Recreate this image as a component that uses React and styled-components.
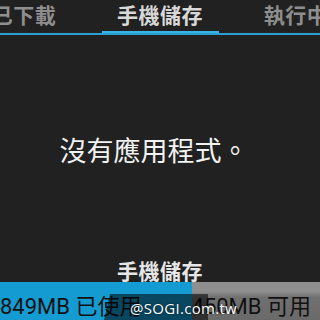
import styled, { createGlobalStyle } from "styled-components";

const GlobalStyle = createGlobalStyle`
  html, body {
    margin: 0;
    padding: 0;
    background: #212121;
  }
`;

const tabs = [
  { label: "已下載", active: false },
  { label: "手機儲存", active: true },
  { label: "執行中", active: false },
];

export default function App() {
  return (
    <>
      <GlobalStyle />
      <Screen>
        <TabBar>
          <TabRow>
            {tabs.map((t) => (
              <Tab key={t.label} active={t.active}>
                {t.label}
              </Tab>
            ))}
          </TabRow>
        </TabBar>

        <Empty>沒有應用程式。</Empty>

        <Footer>
          <StorageLabel>手機儲存</StorageLabel>
          <UsageBar>
            <Used style={{ width: "65%" }}>849MB 已使用</Used>
            <Free>450MB 可用</Free>
            <Shade />
            <Watermark>@SOGI.com.tw</Watermark>
          </UsageBar>
        </Footer>
      </Screen>
    </>
  );
}

const Screen = styled.div`
  width: 320px;
  height: 320px;
  overflow: hidden;
  display: flex;
  flex-direction: column;
  background: #212121;
  font-family: "Noto Sans CJK TC", "Noto Sans", sans-serif;
`;

const TabBar = styled.div`
  height: 35px;
  flex-shrink: 0;
  border-bottom: 2px solid #2a9fd0;
  box-sizing: border-box;
  overflow: hidden;
`;

const TabRow = styled.div`
  display: flex;
  justify-content: center;
  gap: 19px;
  height: 100%;
`;

const Tab = styled.div`
  flex: 0 0 117px;
  display: flex;
  align-items: center;
  justify-content: center;
  height: 100%;
  box-sizing: border-box;
  padding-bottom: 4px;
  font-size: 21px;
  font-weight: 700;
  letter-spacing: 0.5px;
  color: ${({ active }) => (active ? "#d8d8d8" : "#8e8e8e")};
  border-bottom: ${({ active }) =>
    active ? "2px solid #38b4e6" : "2px solid transparent"};
  margin-bottom: -2px;
`;

const Empty = styled.div`
  margin-top: 97px;
  padding-right: 12px;
  text-align: center;
  font-size: 27px;
  line-height: 36px;
  color: #f2f2f2;
`;

const Footer = styled.div`
  margin-top: auto;
  display: flex;
  flex-direction: column;
  align-items: center;
`;

const StorageLabel = styled.div`
  font-size: 21px;
  font-weight: 700;
  line-height: 26px;
  color: #e6e6e6;
  letter-spacing: 0.5px;
  margin-bottom: -1px;
`;

const UsageBar = styled.div`
  position: relative;
  width: 100%;
  height: 38px;
  display: flex;
  font-family: Roboto, "Noto Sans CJK TC", sans-serif;
  font-size: 22px;
  color: #111;
`;

const Used = styled.div`
  background: #149bd2;
  display: flex;
  align-items: center;
  padding-top: 5px;
  box-sizing: border-box;
  white-space: nowrap;
`;

const Free = styled.div`
  flex: 1;
  background: linear-gradient(180deg, #8f8f8f 0%, #8f8f8f 25%, #707070 40%, #6a6a6a 100%);
  display: flex;
  align-items: center;
  justify-content: flex-end;
  padding-top: 5px;
  padding-right: 9px;
  box-sizing: border-box;
  white-space: nowrap;
`;

const Shade = styled.div`
  position: absolute;
  left: 104px;
  bottom: 0;
  width: 104px;
  height: 26px;
  background: rgba(0, 0, 0, 0.55);
  clip-path: polygon(6px 0, 100% 0, 100% 100%, 0 100%);
`;

const Watermark = styled.div`
  position: absolute;
  left: 130px;
  bottom: 3px;
  color: #fff;
  font-family: "Open Sans", "Liberation Sans", sans-serif;
  font-size: 15px;
  line-height: 18px;
  letter-spacing: 0.3px;
  white-space: nowrap;
  text-shadow: 0 0 2px rgba(0, 0, 0, 0.6);
`;
